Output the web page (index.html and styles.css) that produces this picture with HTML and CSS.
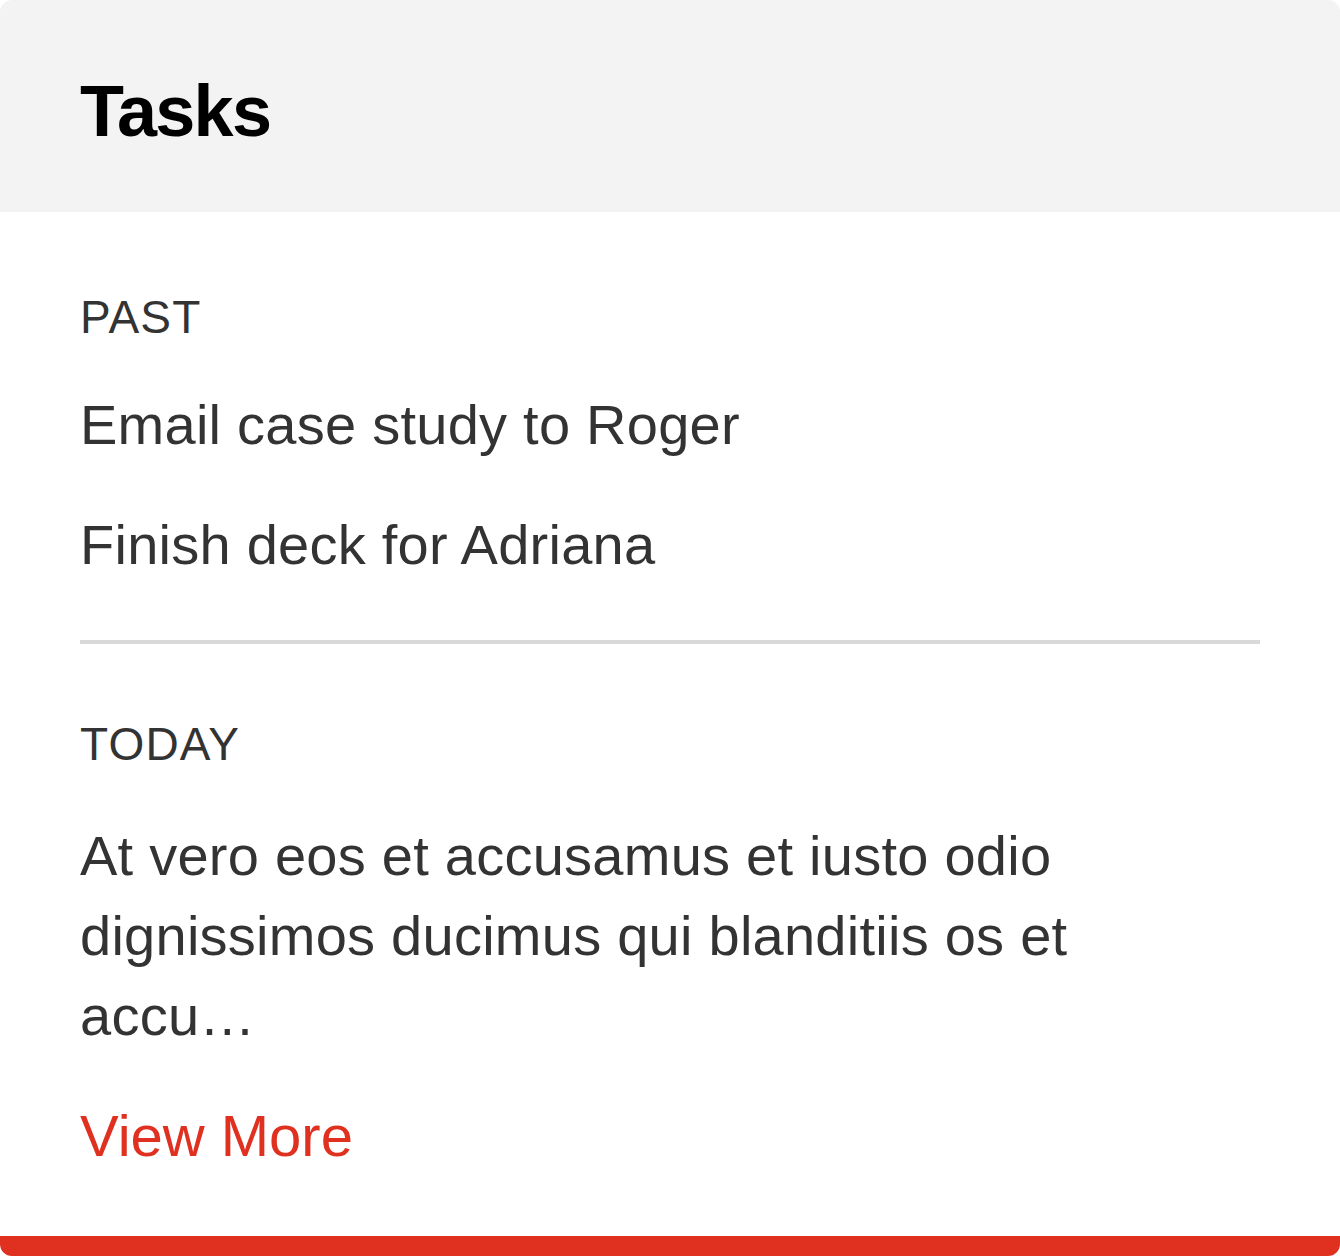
FILE: index.html
```html
<!DOCTYPE html>
<html lang="en">
  <head>
    <meta charset="UTF-8" />
    <title>Tasks</title>
    <link rel="stylesheet" href="styles.css">
  </head>
  <body>
    <div class="card">
      <header class="card-header">
        <h1>Tasks</h1>
      </header>
      <div class="card-body">
        <section class="task-group task-group--past">
          <h2 class="group-label">PAST</h2>
          <ul class="task-list">
            <li>Email case study to Roger</li>
            <li>Finish deck for Adriana</li>
          </ul>
        </section>
        <section class="task-group task-group--today">
          <h2 class="group-label">TODAY</h2>
          <p class="task-note">
            At vero eos et accusamus et iusto odio dignissimos ducimus qui blanditiis os et accu…
          </p>
          <a class="view-more" href="#">View More</a>
        </section>
      </div>
    </div>
  </body>
</html>
```

FILE: styles.css
```css
* {
  box-sizing: border-box;
  margin: 0;
  padding: 0;
}

html,
body {
  width: 100%;
  height: 100%;
}

body {
  font-family: "Liberation Sans", Arial, sans-serif;
  background: #ffffff;
  color: #333333;
}

.card {
  width: 100%;
  background: #ffffff;
  border-radius: 12px;
  border-bottom: 20px solid #df3020;
  overflow: hidden;
}

.card-header {
  background: #f3f3f3;
  height: 212px;
  padding: 75px 80px 0;
}

.card-header h1 {
  font-size: 72px;
  line-height: 72px;
  font-weight: 700;
  letter-spacing: -1.7px;
  color: #000000;
}

.card-body {
  padding: 0 80px 60px;
}

.task-group--past {
  padding-top: 73px;
  padding-bottom: 55px;
}

.task-group--today {
  padding-top: 68px;
  border-top: 4px solid #d9d9d9;
}

.group-label {
  font-size: 46px;
  line-height: 64px;
  font-weight: 400;
  letter-spacing: 1.2px;
  margin-bottom: 36px;
}

.task-list {
  list-style: none;
  display: flex;
  flex-direction: column;
  gap: 40px;
}

.task-list li,
.task-note {
  font-size: 56px;
  line-height: 80px;
  letter-spacing: 0.25px;
}

.task-note {
  padding-top: 4px;
  max-width: 1100px;
}

.view-more {
  display: block;
  margin-top: 40px;
  font-size: 58px;
  line-height: 80px;
  color: #df3020;
  text-decoration: none;
}
```
